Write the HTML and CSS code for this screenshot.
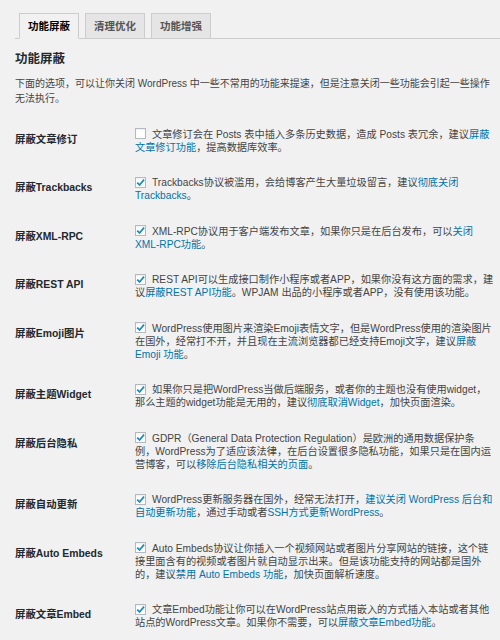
FILE: index.html
```html
<!DOCTYPE html>
<html lang="zh-CN">
<head>
<meta charset="utf-8">
<title>功能屏蔽</title>
<link rel="stylesheet" href="styles.css">
</head>
<body>
<div class="wrap">
  <div class="tabs">
    <span class="tab active">功能屏蔽</span>
    <span class="tab">清理优化</span>
    <span class="tab">功能增强</span>
  </div>
  <h2 class="title">功能屏蔽</h2>
  <p class="intro">下面的选项，可以让你关闭 WordPress 中一些不常用的功能来提速，但是注意关闭一些功能会引起一些操作<br>无法执行。</p>

  <div class="form">
    <div class="row">
      <div class="label">屏蔽文章修订</div>
      <div class="field"><span class="cb"></span>文章修订会在 Posts 表中插入多条历史数据，造成 Posts 表冗余，建议<a>屏蔽<br>文章修订功能</a>，提高数据库效率。</div>
    </div>
    <div class="row">
      <div class="label">屏蔽Trackbacks</div>
      <div class="field"><span class="cb checked"><svg viewBox="0 0 11 11"><path d="M2.2 5.6 L4.6 8 L9 2.6"/></svg></span>Trackbacks协议被滥用，会给博客产生大量垃圾留言，建议<a>彻底关闭<br>Trackbacks</a>。</div>
    </div>
    <div class="row">
      <div class="label">屏蔽XML-RPC</div>
      <div class="field"><span class="cb checked"><svg viewBox="0 0 11 11"><path d="M2.2 5.6 L4.6 8 L9 2.6"/></svg></span>XML-RPC协议用于客户端发布文章，如果你只是在后台发布，可以<a>关闭<br>XML-RPC功能</a>。</div>
    </div>
    <div class="row">
      <div class="label">屏蔽REST API</div>
      <div class="field"><span class="cb checked"><svg viewBox="0 0 11 11"><path d="M2.2 5.6 L4.6 8 L9 2.6"/></svg></span>REST API可以生成接口制作小程序或者APP，如果你没有这方面的需求，建<br>议<a>屏蔽REST API功能</a>。WPJAM 出品的小程序或者APP，没有使用该功能。</div>
    </div>
    <div class="row">
      <div class="label">屏蔽Emoji图片</div>
      <div class="field"><span class="cb checked"><svg viewBox="0 0 11 11"><path d="M2.2 5.6 L4.6 8 L9 2.6"/></svg></span>WordPress使用图片来渲染Emoji表情文字，但是WordPress使用的渲染图片<br>在国外，经常打不开，并且现在主流浏览器都已经支持Emoji文字，建议<a>屏蔽<br>Emoji 功能</a>。</div>
    </div>
    <div class="row">
      <div class="label">屏蔽主题Widget</div>
      <div class="field"><span class="cb checked"><svg viewBox="0 0 11 11"><path d="M2.2 5.6 L4.6 8 L9 2.6"/></svg></span>如果你只是把WordPress当做后端服务，或者你的主题也没有使用widget，<br>那么主题的widget功能是无用的，建议<a>彻底取消Widget</a>，加快页面渲染。</div>
    </div>
    <div class="row">
      <div class="label">屏蔽后台隐私</div>
      <div class="field"><span class="cb checked"><svg viewBox="0 0 11 11"><path d="M2.2 5.6 L4.6 8 L9 2.6"/></svg></span>GDPR（General Data Protection Regulation）是欧洲的通用数据保护条<br>例，WordPress为了适应该法律，在后台设置很多隐私功能，如果只是在国内运<br>营博客，可以<a>移除后台隐私相关的页面</a>。</div>
    </div>
    <div class="row">
      <div class="label">屏蔽自动更新</div>
      <div class="field"><span class="cb checked"><svg viewBox="0 0 11 11"><path d="M2.2 5.6 L4.6 8 L9 2.6"/></svg></span>WordPress更新服务器在国外，经常无法打开，<a>建议关闭 WordPress 后台和<br>自动更新功能</a>，通过手动或者<a>SSH方式更新WordPress</a>。</div>
    </div>
    <div class="row">
      <div class="label">屏蔽Auto Embeds</div>
      <div class="field"><span class="cb checked"><svg viewBox="0 0 11 11"><path d="M2.2 5.6 L4.6 8 L9 2.6"/></svg></span>Auto Embeds协议让你插入一个视频网站或者图片分享网站的链接，这个链<br>接里面含有的视频或者图片就自动显示出来。但是该功能支持的网站都是国外<br>的，建议<a>禁用 Auto Embeds 功能</a>，加快页面解析速度。</div>
    </div>
    <div class="row">
      <div class="label">屏蔽文章Embed</div>
      <div class="field"><span class="cb checked"><svg viewBox="0 0 11 11"><path d="M2.2 5.6 L4.6 8 L9 2.6"/></svg></span>文章Embed功能让你可以在WordPress站点用嵌入的方式插入本站或者其他<br>站点的WordPress文章。如果你不需要，可以<a>屏蔽文章Embed功能</a>。</div>
    </div>
  </div>
</div>
</body>
</html>
```

FILE: styles.css
```css
html, body {
  margin: 0;
  padding: 0;
  background: #f1f1f1;
}

body {
  font-family: "Liberation Sans", "Noto Sans CJK SC", sans-serif;
  color: #444;
  overflow: hidden;
}

.wrap {
  padding-left: 15px;
}

.tabs {
  display: flex;
  gap: 6px;
  padding: 13px 0 0 4px;
  border-bottom: 1px solid #ccc;
}

.tab {
  display: block;
  padding: 5px 8px;
  line-height: 14px;
  font-size: 10.5px;
  font-weight: bold;
  color: #555;
  background: #e5e5e5;
  border: 1px solid #ccc;
  margin-bottom: -1px;
}

.tab.active {
  background: #f1f1f1;
  color: #000;
  border-bottom-color: #f1f1f1;
}

.title {
  margin: 12px 0 0;
  font-size: 12.5px;
  line-height: 16px;
  font-weight: bold;
  color: #23282d;
}

.intro {
  margin: 8.75px 0 0;
  font-size: 10px;
  line-height: 15.5px;
}

.form {
  margin-top: 9.5px;
}

.row {
  display: grid;
  grid-template-columns: 120px 1fr;
}

.label {
  padding-top: 16.25px;
  font-size: 10.4px;
  line-height: 13px;
  font-weight: bold;
  color: #23282d;
}

.field {
  padding: 11.25px 0;
  font-size: 10.2px;
  line-height: 13px;
  white-space: nowrap;
}

.field a {
  color: #0073aa;
  text-decoration: none;
}

.cb {
  display: inline-block;
  box-sizing: border-box;
  width: 11px;
  height: 11px;
  margin-right: 6px;
  vertical-align: -1.5px;
  background: #fff;
  border: 1px solid #b4b9be;
  box-shadow: inset 0 1px 2px rgba(0, 0, 0, 0.07);
  position: relative;
}

.cb svg {
  position: absolute;
  left: -1px;
  top: -1px;
  width: 11px;
  height: 11px;
}

.cb svg path {
  fill: none;
  stroke: #1e8cbe;
  stroke-width: 1.8;
}
```
